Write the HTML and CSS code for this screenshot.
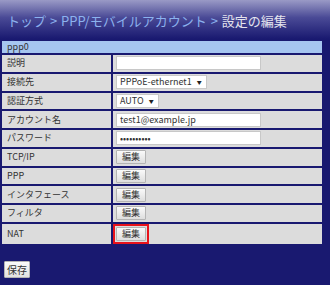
FILE: index.html
```html
<!DOCTYPE html>
<html>
<head>
    <meta charset="utf-8" />
    <title>設定の編集</title>
    <link rel="stylesheet" href="styles.css">
</head>
<body>
    <div id="header">
        <h1><span class="crumb">トップ &gt; PPP/モバイルアカウント &gt; </span>設定の編集</h1>
    </div>

    <table id="settings">
        <tr class="head">
            <th colspan="2">ppp0</th>
        </tr>
        <tr>
            <td class="label">説明</td>
            <td class="value"><input type="text" class="text" /></td>
        </tr>
        <tr>
            <td class="label">接続先</td>
            <td class="value"><span class="select">PPPoE-ethernet1<span class="arrow">▼</span></span></td>
        </tr>
        <tr>
            <td class="label">認証方式</td>
            <td class="value"><span class="select">AUTO<span class="arrow">▼</span></span></td>
        </tr>
        <tr>
            <td class="label">アカウント名</td>
            <td class="value"><input type="text" class="text" value="test1@example.jp" /></td>
        </tr>
        <tr>
            <td class="label">パスワード</td>
            <td class="value"><input type="password" class="text" value="password12" /></td>
        </tr>
        <tr>
            <td class="label">TCP/IP</td>
            <td class="value"><button class="edit">編集</button></td>
        </tr>
        <tr>
            <td class="label">PPP</td>
            <td class="value"><button class="edit">編集</button></td>
        </tr>
        <tr>
            <td class="label">インタフェース</td>
            <td class="value"><button class="edit">編集</button></td>
        </tr>
        <tr>
            <td class="label">フィルタ</td>
            <td class="value"><button class="edit">編集</button></td>
        </tr>
        <tr>
            <td class="label">NAT</td>
            <td class="value"><span class="marked"><button class="edit">編集</button></span></td>
        </tr>
    </table>

    <div id="actions">
        <button class="save">保存</button>
    </div>
</body>
</html>
```

FILE: styles.css
```css
* { margin: 0; padding: 0; box-sizing: border-box; }

body {
    background: #191970;
    font-family: "Noto Sans CJK JP", "Liberation Sans", sans-serif;
    font-size: 9px;
    color: #333;
}

#header {
    height: 39px;
    padding: 12px 0 0 7px;
    background: linear-gradient(#9a9ac6, #4a4a96 45%, #191970);
}

#header h1 {
    font-size: 13px;
    font-weight: normal;
    line-height: 18px;
    word-spacing: 1px;
    color: #e4e4ee;
    white-space: nowrap;
}

#header .crumb { color: #8cb2ee; }

#settings {
    width: 324px;
    border-collapse: separate;
    border-spacing: 2px;
}

#settings th {
    height: 12px;
    padding: 0 5px;
    background: #a6c6f0;
    font-weight: normal;
    text-align: left;
    line-height: 12px;
    color: #333;
}

#settings td {
    height: 16.75px;
    background: #dcdcdc;
    line-height: 12px;
}

#settings td.label {
    width: 109px;
    padding: 0 5px;
}

#settings td.value { padding: 0 3px; }

input.text {
    display: block;
    width: 145px;
    height: 14px;
    padding: 0 3px;
    border: 1px solid #c8c8c8;
    background: #fff;
    font-family: inherit;
    font-size: 9px;
    color: #333;
    outline: none;
}

.select {
    display: inline-block;
    height: 14px;
    padding: 0 4px 0 3px;
    border: 1px solid #c8c8c8;
    background: #fff;
    line-height: 12px;
    vertical-align: middle;
}

.select .arrow {
    margin-left: 5px;
    font-size: 5px;
    vertical-align: 1px;
    color: #222;
}

button {
    font-family: inherit;
    font-size: 9px;
    color: #333;
    cursor: pointer;
}

button.edit {
    display: block;
    width: 30px;
    height: 14px;
    border: 1px solid #b4b4b4;
    border-radius: 1px;
    background: linear-gradient(#fafafa, #dedede);
    line-height: 12px;
}

.marked {
    display: inline-block;
    margin: 0 0 0 -3px;
    padding: 1px;
    border: 2px solid #e8131b;
    vertical-align: middle;
}

#actions { padding: 15px 0 0 4px; }

button.save {
    width: 26px;
    height: 17px;
    border: 1px solid #b4b4b4;
    border-radius: 1px;
    background: linear-gradient(#fafafa, #e2e2e2);
    font-size: 10px;
    line-height: 15px;
}
```
